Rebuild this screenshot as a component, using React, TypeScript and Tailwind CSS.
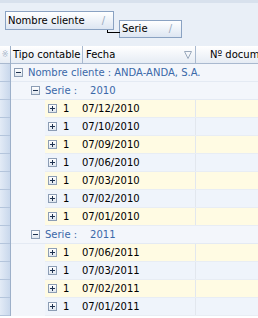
import React from "react";

const font = { fontFamily: "'DejaVu Sans', Tahoma, sans-serif" };

function Box({ sign }: { sign: "+" | "-" }) {
  return (
    <div className="w-[9px] h-[9px] border border-[#8c9db4] bg-gradient-to-b from-white to-[#dfe6ef] flex items-center justify-center shrink-0 relative">
      <div className="absolute left-[1px] top-[3px] w-[5px] h-[1px] bg-[#1e3250]" />
      {sign === "+" && <div className="absolute left-[3px] top-[1px] w-[1px] h-[5px] bg-[#1e3250]" />}
    </div>
  );
}

type Row =
  | { kind: "g0"; text: string }
  | { kind: "g1"; year: string }
  | { kind: "d"; date: string; alt: boolean };

const rows: Row[] = [
  { kind: "g0", text: "Nombre cliente : ANDA-ANDA, S.A." },
  { kind: "g1", year: "2010" },
  { kind: "d", date: "07/12/2010", alt: false },
  { kind: "d", date: "07/10/2010", alt: true },
  { kind: "d", date: "07/09/2010", alt: false },
  { kind: "d", date: "07/06/2010", alt: true },
  { kind: "d", date: "07/03/2010", alt: false },
  { kind: "d", date: "07/02/2010", alt: true },
  { kind: "d", date: "07/01/2010", alt: false },
  { kind: "g1", year: "2011" },
  { kind: "d", date: "07/06/2011", alt: false },
  { kind: "d", date: "07/03/2011", alt: true },
  { kind: "d", date: "07/02/2011", alt: false },
  { kind: "d", date: "07/01/2011", alt: true },
];

function GridRow({ r }: { r: Row }) {
  if (r.kind === "g0") {
    return (
      <div className="flex h-[18px] items-center bg-[#f3f6fb] border-b border-[#e4eaf3]">
        <div className="w-[3px]" />
        <Box sign="-" />
        <span className="ml-[5px] text-[#3a68a8] whitespace-nowrap">{r.text}</span>
      </div>
    );
  }
  if (r.kind === "g1") {
    return (
      <div className="flex h-[18px] items-center bg-[#f3f6fb] border-b border-[#e4eaf3]">
        <div className="w-[20px]" />
        <Box sign="-" />
        <span className="ml-[5px] text-[#3a68a8] whitespace-nowrap">Serie :</span>
        <span className="ml-[13px] text-[#3a68a8]">{r.year}</span>
      </div>
    );
  }
  return (
    <div className="flex h-[18px] bg-[#f3f6fb]">
      <div className="w-[34px] shrink-0" />
      <div
        className={
          "flex flex-1 items-center border-b border-[#e8edf4] " +
          (r.alt ? "bg-[#eff4fb]" : "bg-[#fffbe3]")
        }
      >
        <div className="w-[37px] shrink-0 flex items-center pl-[3px]">
          <Box sign="+" />
          <span className="ml-[6px] text-black">1</span>
        </div>
        <div className="w-[114px] shrink-0 h-full flex items-center border-r border-[#e2e7ee]">
          <span className="text-black">{r.date}</span>
        </div>
        <div className="flex-1" />
      </div>
    </div>
  );
}

export default function App() {
  return (
    <div className="w-[258px] h-[318px] overflow-hidden bg-white text-[10px] leading-none" style={font}>
      {/* group-by panel */}
      <div className="h-[46px] bg-[#e9eff7] border-t-[3px] border-[#d8e1ed] flex items-start relative">
        <div className="relative ml-[5px] mt-[8px] w-[109px] h-[19px] border border-[#8aa2c2] bg-gradient-to-b from-white to-[#dde6f2] flex items-center px-[2px]">
          <span className="text-black">Nombre cliente</span>
          <span className="ml-auto mr-[6px] text-[#9aaabd]">/</span>
          <div className="absolute left-[101px] top-[18px] w-[13px] h-[3px] border-l border-b border-black" />
        </div>
        <div className="ml-[5px] mt-[17px] w-[63px] h-[18px] border border-[#8aa2c2] bg-gradient-to-b from-white to-[#dde6f2] flex items-center px-[2px]">
          <span className="text-black">Serie</span>
          <span className="ml-auto mr-[7px] text-[#9aaabd]">/</span>
        </div>
      </div>

      <div className="flex">
        {/* indicator column */}
        <div className="w-[11px] shrink-0 flex flex-col border-r border-[#9db0c9]">
          <div className="h-[18px] bg-gradient-to-b from-white to-[#e6ecf4] border-b border-[#a9b9cf] flex items-center justify-center text-[#a8b8cc] text-[8px]">
            ※
          </div>
          {rows.map((_, i) => (
            <div key={i} className="h-[18px] bg-gradient-to-r from-[#e3ebf6] to-[#c9d8ec] border-b border-[#b4c5dc]" />
          ))}
        </div>
        <div className="flex-1 flex flex-col min-w-0">
          {/* header */}
          <div className="h-[18px] flex bg-gradient-to-b from-white to-[#e6ecf4] border-b border-[#a9b9cf]">
            <div className="w-[72px] shrink-0 flex items-center pl-[2px] border-r border-[#a9b9cf]">
              <span className="text-black whitespace-nowrap">Tipo contable</span>
            </div>
            <div className="w-[113px] shrink-0 flex items-center pl-[3px] border-r border-[#a9b9cf]">
              <span className="text-black">Fecha</span>
              <svg className="ml-auto mr-[3px]" width="8" height="8" viewBox="0 0 8 8">
                <path d="M0.5 0.5 H7.5 L4 7.5 Z" fill="none" stroke="#9aa9bc" strokeWidth="1" />
              </svg>
            </div>
            <div className="flex-1 flex items-center pl-[14px] overflow-hidden">
              <span className="text-black whitespace-nowrap">Nº documento</span>
            </div>
          </div>
          {rows.map((r, i) => (
            <GridRow key={i} r={r} />
          ))}
        </div>
      </div>
    </div>
  );
}
